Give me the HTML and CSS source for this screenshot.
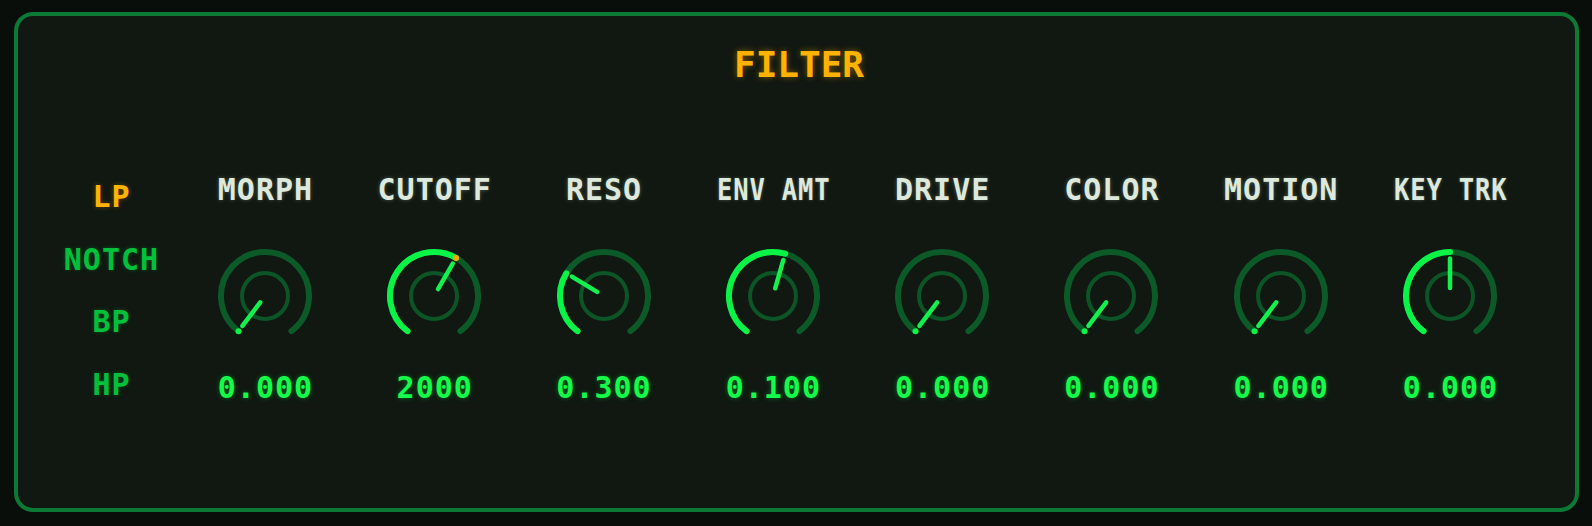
FILE: index.html
```html
<!DOCTYPE html>
<html lang="en">
<head>
<meta charset="utf-8">
<title>Filter</title>
<link rel="stylesheet" href="styles.css">
</head>
<body>
<div class="panel">
  <h1 class="title">FILTER</h1>
  <div class="body">
    <ul class="modes">
      <li class="mode active">LP</li>
      <li class="mode">NOTCH</li>
      <li class="mode">BP</li>
      <li class="mode">HP</li>
    </ul>

    <div class="knob">
      <div class="knob-label">MORPH</div>
      <svg class="dial" viewBox="0 0 100 100">
        <circle class="inner" cx="50" cy="50" r="23"/>
        <path class="track" d="M23.52 85.14 A44 44 0 1 1 76.48 85.14"/>
        <circle class="dot" cx="23.52" cy="85.14" r="3"/>
        <line class="pointer" x1="50" y1="42" x2="50" y2="12.5" transform="rotate(-143 50 50)"/>
      </svg>
      <div class="knob-value">0.000</div>
    </div>

    <div class="knob">
      <div class="knob-label">CUTOFF</div>
      <svg class="dial" viewBox="0 0 100 100">
        <circle class="inner" cx="50" cy="50" r="23"/>
        <path class="track" d="M23.52 85.14 A44 44 0 1 1 76.48 85.14"/>
        <path class="value" d="M23.52 85.14 A44 44 0 0 1 72 11.9"/>
        <line class="pointer" x1="50" y1="42" x2="50" y2="12.5" transform="rotate(30 50 50)"/>
        <circle class="mod" cx="72" cy="11.9" r="3"/>
      </svg>
      <div class="knob-value">2000</div>
    </div>

    <div class="knob">
      <div class="knob-label">RESO</div>
      <svg class="dial" viewBox="0 0 100 100">
        <circle class="inner" cx="50" cy="50" r="23"/>
        <path class="track" d="M23.52 85.14 A44 44 0 1 1 76.48 85.14"/>
        <path class="value" d="M23.52 85.14 A44 44 0 0 1 12.28 27.34"/>
        <line class="pointer" x1="50" y1="42" x2="50" y2="12.5" transform="rotate(-59 50 50)"/>
      </svg>
      <div class="knob-value">0.300</div>
    </div>

    <div class="knob">
      <div class="knob-label"><span class="squeeze">ENV AMT</span></div>
      <svg class="dial" viewBox="0 0 100 100">
        <circle class="inner" cx="50" cy="50" r="23"/>
        <path class="track" d="M23.52 85.14 A44 44 0 1 1 76.48 85.14"/>
        <path class="value" d="M23.52 85.14 A44 44 0 0 1 62.13 7.7"/>
        <line class="pointer" x1="50" y1="42" x2="50" y2="12.5" transform="rotate(16 50 50)"/>
      </svg>
      <div class="knob-value">0.100</div>
    </div>

    <div class="knob">
      <div class="knob-label">DRIVE</div>
      <svg class="dial" viewBox="0 0 100 100">
        <circle class="inner" cx="50" cy="50" r="23"/>
        <path class="track" d="M23.52 85.14 A44 44 0 1 1 76.48 85.14"/>
        <circle class="dot" cx="23.52" cy="85.14" r="3"/>
        <line class="pointer" x1="50" y1="42" x2="50" y2="12.5" transform="rotate(-143 50 50)"/>
      </svg>
      <div class="knob-value">0.000</div>
    </div>

    <div class="knob">
      <div class="knob-label">COLOR</div>
      <svg class="dial" viewBox="0 0 100 100">
        <circle class="inner" cx="50" cy="50" r="23"/>
        <path class="track" d="M23.52 85.14 A44 44 0 1 1 76.48 85.14"/>
        <circle class="dot" cx="23.52" cy="85.14" r="3"/>
        <line class="pointer" x1="50" y1="42" x2="50" y2="12.5" transform="rotate(-143 50 50)"/>
      </svg>
      <div class="knob-value">0.000</div>
    </div>

    <div class="knob">
      <div class="knob-label">MOTION</div>
      <svg class="dial" viewBox="0 0 100 100">
        <circle class="inner" cx="50" cy="50" r="23"/>
        <path class="track" d="M23.52 85.14 A44 44 0 1 1 76.48 85.14"/>
        <circle class="dot" cx="23.52" cy="85.14" r="3"/>
        <line class="pointer" x1="50" y1="42" x2="50" y2="12.5" transform="rotate(-143 50 50)"/>
      </svg>
      <div class="knob-value">0.000</div>
    </div>

    <div class="knob">
      <div class="knob-label"><span class="squeeze">KEY TRK</span></div>
      <svg class="dial" viewBox="0 0 100 100">
        <circle class="inner" cx="50" cy="50" r="23"/>
        <path class="track" d="M23.52 85.14 A44 44 0 1 1 76.48 85.14"/>
        <path class="value" d="M23.52 85.14 A44 44 0 0 1 50 6"/>
        <line class="pointer" x1="50" y1="42" x2="50" y2="12.5"/>
      </svg>
      <div class="knob-value">0.000</div>
    </div>
  </div>
</div>
</body>
</html>
```

FILE: styles.css
```css
* { box-sizing: border-box; }

html, body {
  margin: 0;
  padding: 0;
  background: #0a0e0b;
}

body {
  width: 1592px;
  height: 526px;
  padding: 12px 13px 14px 14px;
  font-family: "DejaVu Sans Mono", "Liberation Mono", monospace;
  font-weight: bold;
}

.panel {
  width: 1565px;
  height: 500px;
  border: 4px solid #0c7a35;
  border-radius: 19px;
  background: #101811;
  padding-top: 30.5px;
}

.title {
  margin: 0;
  font-size: 36px;
  line-height: 36px;
  font-weight: bold;
  text-align: center;
  color: #ffb300;
  text-shadow: 0 0 6px rgba(255, 170, 0, 0.45);
  padding-left: 5px;
}

.body {
  display: grid;
  grid-template-columns: 137.7px repeat(8, 169.3px);
  align-items: start;
  margin-top: 92.3px;
  padding-left: 24.6px;
}

.modes {
  list-style: none;
  margin: 7.4px 0 0 0;
  padding: 0;
  display: flex;
  flex-direction: column;
  gap: 32.5px;
}

.mode {
  font-size: 30px;
  line-height: 30px;
  letter-spacing: 1px;
  text-align: center;
  color: #00c03c;
  text-shadow: 0 0 4px rgba(0, 200, 60, 0.3);
}

.mode.active {
  color: #ffb300;
  text-shadow: 0 0 5px rgba(255, 170, 0, 0.35);
}

.knob {
  display: flex;
  flex-direction: column;
  align-items: center;
}

.knob-label {
  font-size: 30px;
  line-height: 30px;
  height: 30px;
  letter-spacing: 1px;
  color: #dce9dc;
  text-shadow: 0 0 4px rgba(220, 240, 220, 0.3);
  white-space: nowrap;
  padding-left: 1px;
}

.squeeze {
  display: inline-block;
  transform: scaleX(0.85);
}

.dial {
  width: 100px;
  height: 100px;
  margin-top: 41.2px;
  display: block;
  overflow: visible;
}

.knob-value {
  margin-top: 27.2px;
  font-size: 30px;
  line-height: 30px;
  letter-spacing: 1px;
  color: #14fb4a;
  text-shadow: 0 0 5px rgba(0, 255, 70, 0.35);
  padding-left: 1px;
}

.inner {
  fill: none;
  stroke: #0b5526;
  stroke-width: 4;
}

.track {
  fill: none;
  stroke: #0b5a27;
  stroke-width: 6;
  stroke-linecap: round;
}

.value {
  fill: none;
  stroke: #0af447;
  stroke-width: 6;
  stroke-linecap: round;
}

.dot {
  fill: #0af447;
}

.pointer {
  stroke: #14f04e;
  stroke-width: 4.5;
  stroke-linecap: round;
}

.mod {
  fill: #f5a900;
}
```
